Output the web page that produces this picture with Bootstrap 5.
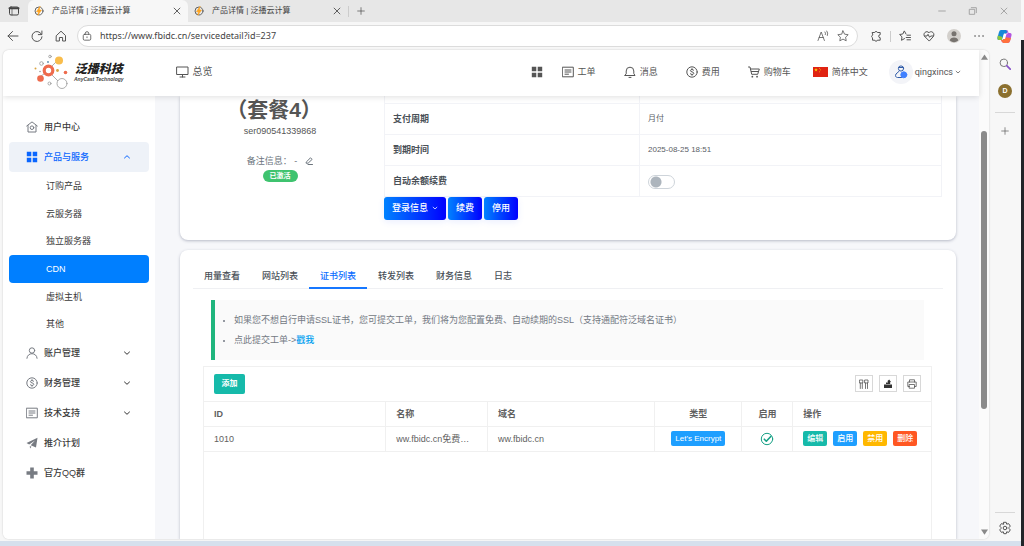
<!DOCTYPE html>
<html lang="zh-CN">
<head>
<meta charset="utf-8">
<meta name="viewport" content="width=device-width, initial-scale=1">
<title>产品详情 | 泛播云计算</title>
<link href="https://cdn.jsdelivr.net/npm/bootstrap@5.3.0/dist/css/bootstrap.min.css" rel="stylesheet">
<style>
:root{--ui:"Liberation Sans","Noto Sans CJK SC",sans-serif;--chrome:#f7f7f7}
body{font-family:var(--ui);font-size:9px;line-height:14px;color:#555;background:var(--chrome)}
a{color:inherit;text-decoration:none}
button{font-family:inherit;line-height:14px}
svg{display:block;flex:none;fill:none;stroke:currentColor;stroke-width:1;stroke-linecap:round;stroke-linejoin:round}
.ibtn{padding:0;border:0;background:none;color:inherit}
.i6{width:6px;height:6px}.i8{width:8px;height:8px}.i10{width:10px;height:10px}.i12{width:12px;height:12px}.i14{width:14px;height:14px}
.solid{stroke:none}
.shrinkable{min-width:0;min-height:0}
/* browser frame */
.tabstrip{height:22px;background:#e7e7e7;color:#444;font-size:8px;padding-right:12px}
.win-tab{width:160px;padding:0 6px;height:22px}
.win-tab.current{background:var(--chrome);border-radius:6px 6px 0 0}
.win-ctl{gap:21px;color:#999}
.tools{height:28px;color:#555}
.nav-btns{gap:12px;padding:0 10px 0 7px}
.address{height:22px;border:1px solid #dcdcdc;border-radius:11px;background:#fff}
.address input{border:0;outline:0;padding:0;font:9px/14px "Noto Sans",sans-serif;color:#444;background:none;min-width:0}
.vline{width:1px;height:11px;background:#ccc}
.tool-icons{margin-left:12px}
.copilot{margin:0 9px 0 12px}
.screen{margin-left:3px;border-radius:6px;box-shadow:0 0 2px rgba(0,0,0,.2);background:#fff}
.side-panel{width:32px;padding-top:8px;gap:14px}
.hline{width:20px;height:1px;background:#d8d8d8}
.user-d{width:14px;height:14px;border-radius:50%;background:#8b702f;color:#fff;font-size:7px;font-weight:700}
.edge{width:3px;padding-top:40px}
.taskbar{height:5px;margin-top:2px;background:#d6e0ed}
.track{width:10px;background:#fbfbfb;color:#8a8a8a;padding:4px 0}
.thumb{width:6px;border-radius:3px;background:#8a8a8a;flex:278}
.above{flex:71}.below{flex:120}
.arrow{width:7px;height:6px;stroke:none}
/* site */
.site-head{height:46px;box-shadow:0 1px 6px rgba(0,0,0,.13);z-index:2;padding:0 18px 2px 31px}
.brand-cn{font-size:12px;line-height:14px;font-weight:900;font-style:italic;color:#222}
.brand-en{font-size:5px;line-height:7px;font-style:italic;font-weight:700;color:#444}
.overview{font-size:10px}
.head-links{gap:28px}
.apps{gap:19px}
.account{gap:21px;margin-left:-6px}
.flag{width:15px;height:10px}
.profile{gap:2px}
.face{width:24px;height:24px;border-radius:50%;background:#f3f4f8}
.user-name{font-family:Roboto,sans-serif}
.menu{width:152px;padding:16px 6px 0 6px;font-weight:500;color:#3a3a3a}
.menu-item{height:30px;padding:0 18px 0 17px;gap:6px;border-radius:4px}
.menu-item svg{color:#777b82}
.menu-item .i8{margin-left:auto;color:#333}
.menu-item.open{background:#eef2f8;color:#0a66ff}
.menu-item.open svg{color:#0a66ff}
.submenu{min-height:166px;font-weight:400}
.submenu a{padding-left:37px;border-radius:4px}
.submenu a.on{background:#007fff;color:#fff;font-weight:500}
.stage{background:#f6f7fa;padding:0 23px 0 25px}
.panel{background:#fff;border-radius:8px;box-shadow:0 1px 3px rgba(60,70,100,.35)}
.panel-top{border-radius:0 0 8px 8px;padding:0 14px 20px 0}
.panel-detail{margin-top:10px}
.summary{width:204px;padding-right:4px}
.plan{font-size:21px;line-height:28px;font-weight:700;color:#555;padding-right:12px}
.state{background:#3fc36f;color:#fff;border-radius:7px;padding:0 7px;font-size:7px;line-height:12px;font-weight:700}
.facts,.certs{--bs-table-bg:transparent;margin:0;color:#5a6066;table-layout:fixed;border-color:#f0f1f4}
.facts th,.facts td{height:31px;padding:0 8px;vertical-align:middle;font-size:8px;border:1px solid #f2f3f7}
.facts th{font-size:9px;color:#495057;font-weight:600;width:255px}
.facts tr:first-child>*{height:7px;border-top:0}
.facts .form-switch{min-height:0;padding:5px 0 0}
.facts .form-check-input{display:block;float:none;margin:0;width:27px;height:14px;border-color:#ced4da;background-image:radial-gradient(circle at 7px 6px,#adb5bd 5px,transparent 6px);background-size:100% 100%}
.btn-row{gap:2px}
.btn-grad{height:23px;padding:0 8px;border:0;border-radius:3px;color:#fff;font-size:9px;font-weight:500;background:linear-gradient(to right,#0082ff,#0000ff);box-shadow:0 2px 6px rgba(90,120,255,.12)}
.detail-tabs{margin:0 13px;border-bottom:1px solid #eff0f3;padding-top:16px}
.detail-tabs .nav-link{padding:3px 11px 5px;border:0;border-bottom:1px solid transparent;border-radius:0;color:#495057;font-weight:500;margin-bottom:-1px;line-height:14px}
.detail-tabs .nav-link.active{color:#0a6cff;border-bottom:2px solid #1677ff;padding-bottom:4px;background:none}
.tip{margin:11px 32px 6px 31px;border-left:4px solid #1fb57d;background:#fafafa;color:#737983;padding:10px 0}
.tip ul{margin:0;padding-left:19px;line-height:20px}
.tip li::marker{font-size:8px}
.tip a{color:#01a0f0;font-weight:500}
.grid-box{margin:0 24px 0 23px;border:1px solid #f0f0f0}
.grid-tools{height:34px;padding:0 10px}
.tool-set{gap:6px}
.btn-add{width:31px;height:20px;background:#16baaa;border:0;border-radius:2px;color:#fff;font-size:8px;font-weight:600;padding:0}
.tool{width:18px;height:17px;border:1px solid #d8d8d8;background:#fff;padding:0;color:#555}
.tool svg{stroke-width:.8}
.certs th,.certs td{height:25px;padding:0 10px;border:1px solid #f0f0f0;vertical-align:middle;color:#5f5f5f}
.certs th{font-weight:600}
.certs tr>:first-child{border-left:0}.certs tr>:last-child{border-right:0;padding-right:0}
.chip{height:15px;border:0;border-radius:2px;color:#fff;font-size:8px;padding:0 4px;line-height:15px;font-weight:500}
.c-green{background:#16baaa}.c-blue{background:#1e9fff}.c-amber{background:#ffb800}.c-red{background:#ff5722}
.w-id{width:25%}.w-name{width:14%}.w-host{width:23%}.w-type{width:12%}.w-on{width:7%}
.ok{color:#16a085}
</style>
<script src="https://cdn.jsdelivr.net/npm/bootstrap@5.3.0/dist/js/bootstrap.bundle.min.js"></script>
</head>
<body class="vh-100 overflow-hidden d-flex">
<svg class="d-none" aria-hidden="true">
  <symbol id="x" viewBox="0 0 12 12"><path d="M2.500 2.500l7 7M9.500 2.500l-7 7"/></symbol>
  <symbol id="plus" viewBox="0 0 12 12"><path d="M6 1v10M1 6h10"/></symbol>
  <symbol id="down" viewBox="0 0 8 8"><path d="M1.500 3L4 5.300l2.500-2.300"/></symbol>
  <symbol id="up" viewBox="0 0 8 8"><path d="M1.500 5L4 2.700 6.500 5"/></symbol>
  <symbol id="bolt" viewBox="0 0 12 12"><circle cx="6" cy="6" r="4.800" stroke="#555" stroke-width="1.100"/><path d="M7 .8L3 6.800h2.400L4.600 11.200l4.300-6.400H6.400z" fill="#ffa51f" stroke="#ffa51f" stroke-width=".8"/></symbol>
  <symbol id="tiles" viewBox="0 0 12 12"><path d="M.8.8h4.500v4.500H.8zM6.700.8h4.500v4.500H6.700zM.8 6.700h4.500v4.500H.8zM6.700 6.700h4.500v4.500H6.700z" fill="currentColor" stroke="none"/></symbol>
  <symbol id="note" viewBox="0 0 12 12"><path d="M.7 1.200h10.600v9.600H.7zM3 4h6M3 6h6M3 8.200h3.500"/></symbol>
  <symbol id="coin" viewBox="0 0 12 12"><circle cx="6" cy="6" r="5.200"/><path d="M7.800 4.300C7.300 3.300 4.500 3.100 4.400 4.600 4.300 6.200 7.800 5.500 7.800 7.300 7.700 8.900 4.700 8.800 4.200 7.700M6 2.600v.7M6 8.500v.8"/></symbol>
  <symbol id="home" viewBox="0 0 12 12"><path d="M1.500 5.500L6 1.200l4.500 4.300V11H7.600V7.500H4.400V11H1.500z"/></symbol>
</svg>

<div class="d-flex flex-column flex-fill shrinkable">
  <div class="tabstrip d-flex align-items-center flex-shrink-0">
    <button class="ibtn mx-2" aria-label="标签页"><svg class="i12" viewBox="0 0 12 12"><rect x="1.500" y="2" width="9" height="8" rx="1.500"/><path d="M1.500 3.300h9" stroke-width="2"/><path d="M4 4v6" stroke-width=".7"/></svg></button>
    <div class="win-tab current d-flex align-items-center gap-1"><svg class="i10"><use href="#bolt"/></svg><span class="ms-1">产品详情 | 泛播云计算</span><button class="ibtn ms-auto" aria-label="关闭"><svg class="i10"><use href="#x"/></svg></button></div>
    <div class="win-tab d-flex align-items-center gap-1"><svg class="i10"><use href="#bolt"/></svg><span class="ms-1">产品详情 | 泛播云计算</span><button class="ibtn ms-auto" aria-label="关闭"><svg class="i10"><use href="#x"/></svg></button></div>
    <span class="vline"></span>
    <button class="ibtn ms-2" aria-label="新建标签页"><svg class="i8"><use href="#plus"/></svg></button>
    <div class="win-ctl d-flex ms-auto align-items-center">
      <button class="ibtn" aria-label="最小化"><svg class="i10" viewBox="0 0 12 12"><path d="M2 6h8"/></svg></button>
      <button class="ibtn" aria-label="还原"><svg class="i10" viewBox="0 0 12 12"><path d="M2 4h6v6H2zM4 2h6v6"/></svg></button>
      <button class="ibtn" aria-label="关闭窗口"><svg class="i10"><use href="#x"/></svg></button>
    </div>
  </div>

  <div class="tools d-flex align-items-center flex-shrink-0">
    <div class="nav-btns d-flex">
      <button class="ibtn" aria-label="返回"><svg class="i12" viewBox="0 0 12 12"><path d="M11 6H1M5.500 1.500L1 6l4.500 4.500"/></svg></button>
      <button class="ibtn" aria-label="刷新"><svg class="i12" viewBox="0 0 12 12"><path d="M10.600 4.500A5 5 0 1 0 11 6.800M10.900 1v3.600H7.300"/></svg></button>
      <button class="ibtn" aria-label="主页"><svg class="i12"><use href="#home"/></svg></button>
    </div>
    <div class="address d-flex align-items-center flex-fill px-1">
      <svg class="i10 me-2" viewBox="0 0 12 12"><rect x="1.500" y="4" width="9" height="7" rx="1.500"/><path d="M4 4V2.800a2 2 0 0 1 4 0V4M6 7v1"/></svg>
      <input class="flex-fill" type="text" aria-label="地址" value="https://www.fbidc.cn/servicedetail?id=237">
      <button class="ibtn me-2" aria-label="朗读"><svg class="i12" viewBox="0 0 12 12"><path d="M1 10.500L4.200 2l3.200 8.500M2.200 7.500h4M8 2q1 1.200.4 2.600M9.800 1q1.600 2 .6 4.500" stroke-width=".8"/></svg></button>
      <button class="ibtn me-1" aria-label="收藏"><svg class="i12" viewBox="0 0 12 12"><path d="M6 .9l1.600 3.300 3.600.5-2.600 2.500.6 3.600L6 9.100l-3.200 1.700.6-3.600L.8 4.700l3.600-.5z" stroke-width=".8"/></svg></button>
    </div>
    <div class="tool-icons d-flex align-items-center">
      <button class="ibtn" aria-label="扩展"><svg class="i12" viewBox="0 0 12 12"><path d="M2.500 2.500h2.200a1.400 1.400 0 0 1 2.700 0h2.800v2.200a1.500 1.500 0 0 0 0 3v2.500H7.400a1.400 1.400 0 0 1-2.700 0H2.500V7.700a1.400 1.400 0 0 1 0-2.600z"/></svg></button>
      <span class="vline mx-2"></span>
      <button class="ibtn me-2" aria-label="收藏夹"><svg class="i12" viewBox="0 0 12 12"><path d="M7 4L5.300.9 3.800 4l-3.200.5 2.400 2.300-.5 3.500 3-1.700M8 5.200h3.500M7.200 7.500h4.300M8 9.800h3.500"/></svg></button>
      <button class="ibtn ms-1 me-2" aria-label="健康"><svg class="i12" viewBox="0 0 12 12"><path d="M6 10.800L1.500 6.300C-.5 3.500 3.500-.2 6 2.800 8.500-.2 12.500 3.500 10.500 6.300zM1.500 6H4l1-1.700 1.600 3L7.700 6h2.800"/></svg></button>
      <svg class="i14 solid ms-1 me-2" viewBox="0 0 14 14"><circle cx="7" cy="7" r="7" fill="#d3d0cc"/><circle cx="7" cy="4.800" r="2.500" fill="#77736f"/><path d="M2.800 11.500C2.800 7.500 11.200 7.500 11.200 11.500Q7 15 2.800 11.500" fill="#77736f"/></svg>
      <button class="ibtn ms-1" aria-label="更多"><svg class="i12" viewBox="0 0 12 12"><path d="M2 6h.1M6 6h.1M10 6h.1" stroke-width="1.600"/></svg></button>
      <svg class="copilot solid" width="15" height="15" viewBox="0 0 15 15"><path d="M4 1h5q1.500 0 2 2L9 4.500H7L5 11H2Q0 11 .5 8.500L2 3Q2.500 1 4 1" fill="#1688d8"/><path d="M.8 6.500L5.500 8 5 11H2Q.3 11 .5 8.500" fill="#8cc63e"/><path d="M9 1q2 0 2.500 3H13q2 0 1.500 2.500L13 12q-.5 2-2.500 2H6.500Q5 14 4 11h2L8 4.500h3" fill="#b455e0"/><path d="M14 9L13 12q-.5 2-2.500 2H6.500Q5 14 4 11h2l1-3z" fill="#ff713d"/><path d="M7 5h2.500L8 10H5.500z" fill="#fff"/></svg>
    </div>
  </div>

  <div class="d-flex flex-fill shrinkable">
    <div class="screen d-flex flex-fill overflow-hidden shrinkable">
      <div class="d-flex flex-column flex-fill shrinkable">
        <header class="site-head d-flex align-items-center bg-white position-relative flex-shrink-0">
          <a href="#" class="d-flex align-items-center gap-1">
            <svg width="36" height="36" viewBox="0 0 36 36"><g stroke="#999" stroke-width=".8"><path d="M17 13l5-5M18 21l6 6M10 20l-3 2"/><circle cx="28" cy="29.500" r="5" fill="#fff"/><circle cx="7.500" cy="9.500" r="1.800"/><circle cx="16" cy="2.500" r="1.300"/><circle cx="15.500" cy="29.500" r="1.500"/></g><g stroke="none"><circle cx="25" cy="6.500" r="4" fill="#f9bd4c"/><circle cx="6.500" cy="24.500" r="3.300" fill="#ee6b4d"/><circle cx="31.500" cy="18.500" r="1.800" fill="#ee6b4d"/><circle cx="23.500" cy="16.500" r="1.400" fill="#d9a441"/><circle cx="1.500" cy="14.500" r="1" fill="#d9a441"/><circle cx="14" cy="8" r=".9" fill="#58a"/><circle cx="6" cy="17.500" r=".8" fill="#999"/></g><circle cx="14.500" cy="16.500" r="4.300" stroke="#ee6b4d" stroke-width="3.200" fill="#fff"/></svg>
            <span class="text-center"><span class="brand-cn d-block">泛播科技</span><span class="brand-en d-block">AnyCast Technology</span></span>
          </a>
          <a href="#" class="overview d-flex align-items-center gap-1 ms-5"><svg class="ms-1" width="13" height="12" viewBox="0 0 13 12"><path d="M1 1h11v7.500H1zM6.500 8.500V11M4 11h5"/></svg>总览</a>
          <nav class="head-links d-flex align-items-center ms-auto text-nowrap">
            <div class="apps d-flex align-items-center"><a href="#" aria-label="应用"><svg class="i12"><use href="#tiles"/></svg></a>
            <a href="#" class="d-flex align-items-center gap-1"><svg class="i12"><use href="#note"/></svg>工单</a></div>
            <a href="#" class="d-flex align-items-center gap-1"><svg class="i12" viewBox="0 0 12 12"><path d="M1 9.500h10L9.800 7.500V5a3.800 3.800 0 0 0-7.600 0v2.500zM5 11.400h2"/></svg>消息</a>
            <a href="#" class="d-flex align-items-center gap-1"><svg class="i12"><use href="#coin"/></svg>费用</a>
            <a href="#" class="d-flex align-items-center gap-1"><svg class="i12" viewBox="0 0 12 12"><path d="M.5 1H2l1.700 7.300h6L11.300 3H2.500M3.400 5.500h7"/><path d="M4.300 10.700h.1M9 10.700h.1" stroke-width="1.700"/></svg>购物车</a>
            <div class="account d-flex align-items-center">
              <a href="#" class="d-flex align-items-center gap-1"><svg class="flag solid" viewBox="0 0 15 10"><path d="M0 0h15v10H0z" fill="#e02312"/><path d="M3 1l.5 1.300h1.300l-1 .8.400 1.300L3 3.600l-1.200.8.400-1.300-1-.8h1.300z" fill="#ffd800"/><path d="M6 1h.8v.8H6zM7 2.500h.8v.8H7zM6 4.500h.8v.8H6z" fill="#ffd800"/></svg>简体中文</a>
              <a href="#" class="profile d-flex align-items-center"><span class="face d-flex align-items-center justify-content-center"><svg class="i14" viewBox="0 0 14 14"><g stroke="#315ca8"><circle cx="7" cy="3.500" r="2.600"/><path d="M4.600 2.500h4.800M5 6.300L2 9q-1.500 3 1.500 3.500h4"/></g><circle cx="9.800" cy="9.800" r="3" fill="#4080ff" stroke="#4080ff"/></svg></span><span class="user-name">qingxincs</span><svg class="i6"><use href="#down"/></svg></a>
            </div>
          </nav>
        </header>
        <div class="d-flex flex-fill shrinkable">
          <nav class="menu flex-shrink-0 bg-white">
            <a href="#" class="menu-item d-flex align-items-center"><svg class="i12" viewBox="0 0 12 12"><path d="M.7 5L6 .9 11.300 5M2 4.500V11h8V4.500"/><circle cx="6" cy="6.700" r="1.800"/></svg>用户中心</a>
            <a href="#" class="menu-item open d-flex align-items-center"><svg class="i12"><use href="#tiles"/></svg>产品与服务<svg class="i8"><use href="#up"/></svg></a>
            <div class="submenu d-flex flex-column">
              <a href="#" class="d-flex align-items-center flex-fill">订购产品</a>
              <a href="#" class="d-flex align-items-center flex-fill">云服务器</a>
              <a href="#" class="d-flex align-items-center flex-fill">独立服务器</a>
              <a href="#" class="on d-flex align-items-center flex-fill">CDN</a>
              <a href="#" class="d-flex align-items-center flex-fill">虚拟主机</a>
              <a href="#" class="d-flex align-items-center flex-fill">其他</a>
            </div>
            <a href="#" class="menu-item d-flex align-items-center"><svg class="i12" viewBox="0 0 12 12"><circle cx="6" cy="3.500" r="2.700"/><path d="M.9 11.300C1.300 5 10.700 5 11.100 11.300"/></svg>账户管理<svg class="i8"><use href="#down"/></svg></a>
            <a href="#" class="menu-item d-flex align-items-center"><svg class="i12"><use href="#coin"/></svg>财务管理<svg class="i8"><use href="#down"/></svg></a>
            <a href="#" class="menu-item d-flex align-items-center"><svg class="i12"><use href="#note"/></svg>技术支持<svg class="i8"><use href="#down"/></svg></a>
            <a href="#" class="menu-item d-flex align-items-center"><svg class="i12 solid" viewBox="0 0 12 12"><path d="M11.500.8L.5 6l2.700 1.500L9 3.400 4.700 8.200 10 10.500zM3.800 9l1.700.8L4 11.500z" fill="currentColor"/></svg>推介计划</a>
            <a href="#" class="menu-item d-flex align-items-center"><svg class="i12 solid" viewBox="0 0 12 12"><path d="M4.200.5h3.600v3.700h3.700v3.600H7.800v3.700H4.200V7.800H.5V4.200h3.700z" fill="currentColor"/></svg>官方QQ群</a>
          </nav>
          <main class="stage flex-fill d-flex flex-column shrinkable">
            <section class="panel panel-top d-flex flex-shrink-0">
              <div class="summary flex-shrink-0 text-center">
                <div class="plan">（套餐4）</div>
                <div class="mb-3">ser090541339868</div>
                <div class="d-flex justify-content-center align-items-center gap-1 text-secondary">备注信息： -<button class="ibtn ms-1" aria-label="编辑备注"><svg class="i8" viewBox="0 0 8 8"><path d="M1.500 4.800L5.500.8l1.600 1.600-4 3.800H1.500zM3 7.500h4.500"/></svg></button></div>
                <span class="state d-inline-block">已激活</span>
              </div>
              <div class="flex-fill">
                <table class="facts table">
                  <tr><th></th><td></td></tr>
                  <tr><th>支付周期</th><td>月付</td></tr>
                  <tr><th>到期时间</th><td>2025-08-25 18:51</td></tr>
                  <tr><th><label for="renew">自动余额续费</label></th><td><div class="form-check form-switch"><input class="form-check-input" type="checkbox" role="switch" id="renew"></div></td></tr>
                </table>
                <div class="btn-row d-flex">
                  <button class="btn-grad d-flex align-items-center gap-1">登录信息<svg class="i6"><use href="#down"/></svg></button>
                  <button class="btn-grad">续费</button>
                  <button class="btn-grad">停用</button>
                </div>
              </div>
            </section>
            <section class="panel panel-detail flex-fill d-flex flex-column rounded-bottom-0">
              <ul class="detail-tabs nav">
                <li class="nav-item"><a class="nav-link" href="#">用量查看</a></li>
                <li class="nav-item"><a class="nav-link" href="#">网站列表</a></li>
                <li class="nav-item"><a class="nav-link active" href="#">证书列表</a></li>
                <li class="nav-item"><a class="nav-link" href="#">转发列表</a></li>
                <li class="nav-item"><a class="nav-link" href="#">财务信息</a></li>
                <li class="nav-item"><a class="nav-link" href="#">日志</a></li>
              </ul>
              <div class="tip"><ul><li>如果您不想自行申请SSL证书，您可提交工单，我们将为您配置免费、自动续期的SSL（支持通配符泛域名证书）</li><li>点此提交工单-&gt;<a href="#">戳我</a></li></ul></div>
              <div class="grid-box flex-fill border-bottom-0">
                <div class="grid-tools d-flex align-items-center">
                  <button class="btn-add me-auto">添加</button>
                  <div class="tool-set d-flex">
                    <button class="tool d-flex align-items-center justify-content-center" aria-label="筛选列"><svg class="i10" viewBox="0 0 10 10"><path d="M.8 1h3v3h-3zM6 1h3v3H6zM1.300 4v5.500M3.300 4v5.500M6.500 4v5.500M8.500 4v5.500"/></svg></button>
                    <button class="tool d-flex align-items-center justify-content-center" aria-label="导出"><svg class="i10" viewBox="0 0 10 10"><path d="M1 5.500h8V9H1zM3 5V3.500h2L4.500 2 6.200.5 8 3H7.200v2z" fill="#333" stroke="none"/></svg></button>
                    <button class="tool d-flex align-items-center justify-content-center" aria-label="打印"><svg class="i10" viewBox="0 0 10 10"><path d="M2.500 3V.8h5V3M2.500 7.500H.8V3h8.400v4.500H7.500M2.500 5.500h5v3.700h-5z"/></svg></button>
                  </div>
                </div>
                <table class="certs table">
                  <colgroup><col class="w-id"><col class="w-name"><col class="w-host"><col class="w-type"><col class="w-on"><col></colgroup>
                  <thead><tr><th>ID</th><th>名称</th><th>域名</th><th class="text-center">类型</th><th class="text-center">启用</th><th>操作</th></tr></thead>
                  <tbody><tr><td>1010</td><td class="text-nowrap">ww.fbidc.cn免费…</td><td>ww.fbidc.cn</td>
                    <td class="text-center"><button class="chip c-blue">Let's Encrypt</button></td>
                    <td><svg class="i14 ok mx-auto" viewBox="0 0 14 14"><circle cx="7" cy="7" r="5.700"/><path d="M4.300 7.200l2 2 4.500-4.700" stroke-width="1.600"/></svg></td>
                    <td><div class="tool-set d-flex"><button class="chip c-green">编辑</button><button class="chip c-blue">启用</button><button class="chip c-amber">禁用</button><button class="chip c-red">删除</button></div></td></tr></tbody>
                </table>
              </div>
            </section>
          </main>
        </div>
      </div>
      <div class="track d-flex flex-column align-items-center flex-shrink-0">
        <svg class="arrow" viewBox="0 0 8 6"><path d="M4 0l4 6H0z" fill="currentColor"/></svg>
        <span class="above"></span><span class="thumb"></span><span class="below"></span>
        <svg class="arrow" viewBox="0 0 8 6"><path d="M0 0h8L4 6z" fill="currentColor"/></svg>
      </div>
    </div>
    <aside class="side-panel d-flex flex-column align-items-center flex-shrink-0">
      <button class="ibtn" aria-label="搜索"><svg class="i12" viewBox="0 0 12 12"><circle cx="4.800" cy="4.800" r="3.700" stroke="#777"/><path d="M7.700 7.700l3.500 3.500" stroke="#8a56c9" stroke-width="1.800"/></svg></button>
      <a href="#" class="user-d d-flex align-items-center justify-content-center">D</a>
      <span class="hline"></span>
      <button class="ibtn" aria-label="添加"><svg class="i8"><use href="#plus"/></svg></button>
      <div class="mt-auto d-flex flex-column align-items-center gap-2 pb-1">
        <span class="hline"></span>
        <button class="ibtn" aria-label="设置"><svg class="i14" viewBox="0 0 14 14"><path d="M5.800 1.300h2.400l.5 1.900 1.900-.6 1.700 2.500L11 6.500v1l1.300 1.400-1.700 2.500-1.900-.6-.5 1.900H5.800l-.5-1.900-1.900.6-1.700-2.500L3 7.500v-1L1.700 5.100l1.700-2.500 1.900.6z"/><circle cx="7" cy="7" r="1.800"/></svg></button>
      </div>
    </aside>
  </div>
  <div class="taskbar flex-shrink-0"></div>
</div>
<div class="edge flex-shrink-0 d-flex"><span class="flex-fill bg-dark"></span></div>
</body>
</html>
